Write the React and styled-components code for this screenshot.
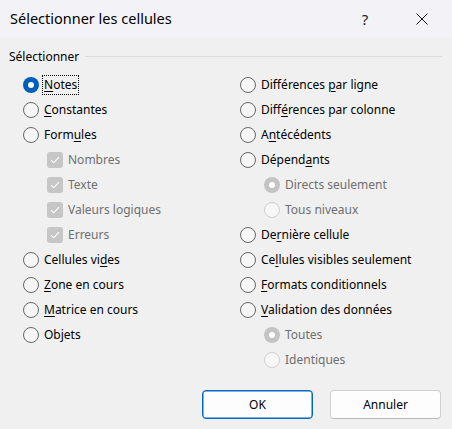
import React from "react";
import styled, { createGlobalStyle } from "styled-components";

const Global = createGlobalStyle`
  html, body { margin: 0; padding: 0; background: #f0f0f0; }
  body { font-family: "Noto Sans", "Open Sans", sans-serif; }
`;

const Window = styled.div`
  width: 452px;
  height: 429px;
  background: #f0f0f0;
  display: flex;
  flex-direction: column;
  overflow: hidden;
  color: #000;
`;

const TitleBar = styled.div`
  height: 37px;
  flex: none;
  background: #f3f3f7;
  display: flex;
  align-items: center;
  padding-left: 10px;
  padding-right: 7px;
`;

const Title = styled.div`
  flex: 1;
  font-size: 14.5px;
  line-height: 20px;
  margin-top: -1px;
`;

const Controls = styled.div`
  display: flex;
  gap: 11px;
`;

const TitleButton = styled.div`
  width: 46px;
  height: 37px;
  display: flex;
  align-items: center;
  justify-content: center;
  font-size: 15px;
  color: #1a1a1a;
`;

const Body = styled.div`
  padding: 10px 10px 0 9px;
  display: flex;
  flex-direction: column;
`;

const GroupHeader = styled.div`
  height: 18px;
  display: flex;
  align-items: center;
  gap: 6px;
  font-size: 12px;
`;

const GroupLine = styled.div`
  flex: 1;
  height: 1px;
  background: #dcdcdc;
  margin-top: 1px;
`;

const Columns = styled.div`
  margin-top: 7px;
  padding-left: 14px;
  display: grid;
  grid-template-columns: 217px 1fr;
  height: 300px;
`;

const Column = styled.div`
  display: flex;
  flex-direction: column;
`;

const Row = styled.div`
  height: 25px;
  display: flex;
  align-items: center;
  gap: 5px;
  padding-left: ${(p) => (p.$indent ? 24 : 0)}px;
  font-size: 12px;
  color: ${(p) => (p.$disabled ? "#6f6f6f" : "#000")};
  white-space: nowrap;
`;

const RadioCircle = styled.span`
  box-sizing: border-box;
  width: 16px;
  height: 16px;
  border-radius: 50%;
  flex: none;
  display: flex;
  align-items: center;
  justify-content: center;
  border: ${(p) =>
    p.$checked ? "none" : p.$disabled ? "1px solid #cfcfcf" : "1px solid #676767"};
  background: ${(p) =>
    p.$checked ? (p.$disabled ? "#c4c4c4" : "#005fb8") : p.$disabled ? "#f7f7f7" : "#f6f6f6"};
  &::after {
    content: "";
    display: ${(p) => (p.$checked ? "block" : "none")};
    width: 6px;
    height: 6px;
    border-radius: 50%;
    background: #fff;
  }
`;

const CheckBox = styled.span`
  width: 16px;
  height: 16px;
  border-radius: 3px;
  background: #c6c6c6;
  flex: none;
  display: flex;
  align-items: center;
  justify-content: center;
`;

const Label = styled.span`
  line-height: 16px;
  padding: 1px 1px;
  margin-left: -1px;
  outline: ${(p) => (p.$focus ? "1px dotted #000" : "none")};
  outline-offset: 0;
`;

const Key = styled.span`
  text-decoration: underline;
  text-underline-offset: 2px;
`;

const Footer = styled.div`
  display: flex;
  justify-content: flex-end;
  gap: 17px;
  margin-top: 18px;
  padding-right: 1px;
`;

const Button = styled.button`
  box-sizing: border-box;
  width: 111px;
  height: 29px;
  border-radius: 4px;
  background: #fdfdfd;
  font-family: inherit;
  font-size: 12px;
  color: #000;
  padding: 0;
  border: 1px solid ${(p) => (p.$primary ? "#0067c0" : "#d0d0d0")};
  border-bottom-color: ${(p) => (p.$primary ? "#0067c0" : "#b8b8b8")};
  box-shadow: ${(p) => (p.$primary ? "inset 0 0 0 0.5px #0067c0" : "none")};
`;

const Radio = ({ checked, disabled, indent, focus, children }) => (
  <Row $disabled={disabled} $indent={indent}>
    <RadioCircle $checked={checked} $disabled={disabled} />
    <Label $focus={focus}>{children}</Label>
  </Row>
);

const Check = ({ children }) => (
  <Row $disabled $indent>
    <CheckBox>
      <svg width="10" height="8" viewBox="0 0 10 8">
        <path d="M1 4.2 L3.7 6.8 L9 1.2" fill="none" stroke="#fff" strokeWidth="1.1" />
      </svg>
    </CheckBox>
    <Label>{children}</Label>
  </Row>
);

export default function App() {
  return (
    <Window>
      <Global />
      <TitleBar>
        <Title>Sélectionner les cellules</Title>
        <Controls>
          <TitleButton>?</TitleButton>
          <TitleButton>
            <svg width="12" height="12" viewBox="0 0 12 12">
              <path d="M0.5 0.5 L11.5 11.5 M11.5 0.5 L0.5 11.5" stroke="#1a1a1a" strokeWidth="1" />
            </svg>
          </TitleButton>
        </Controls>
      </TitleBar>
      <Body>
        <GroupHeader>
          <span>Sélectionner</span>
          <GroupLine />
        </GroupHeader>
        <Columns>
          <Column>
            <Radio checked focus><Key>N</Key>otes</Radio>
            <Radio><Key>C</Key>onstantes</Radio>
            <Radio>Form<Key>u</Key>les</Radio>
            <Check>Nombres</Check>
            <Check>Texte</Check>
            <Check>Valeurs logiques</Check>
            <Check>Erreurs</Check>
            <Radio>Cellules vi<Key>d</Key>es</Radio>
            <Radio><Key>Z</Key>one en cours</Radio>
            <Radio><Key>M</Key>atrice en cours</Radio>
            <Radio>Objets</Radio>
          </Column>
          <Column>
            <Radio>Différences <Key>p</Key>ar ligne</Radio>
            <Radio>Diff<Key>é</Key>rences par colonne</Radio>
            <Radio>A<Key>n</Key>técédents</Radio>
            <Radio>Dépend<Key>a</Key>nts</Radio>
            <Radio checked disabled indent>Directs seulement</Radio>
            <Radio disabled indent>Tous niveaux</Radio>
            <Radio>De<Key>r</Key>nière cellule</Radio>
            <Radio>Ce<Key>l</Key>lules visibles seulement</Radio>
            <Radio><Key>F</Key>ormats conditionnels</Radio>
            <Radio><Key>V</Key>alidation des données</Radio>
            <Radio checked disabled indent>Toutes</Radio>
            <Radio disabled indent>Identiques</Radio>
          </Column>
        </Columns>
        <Footer>
          <Button $primary>OK</Button>
          <Button>Annuler</Button>
        </Footer>
      </Body>
    </Window>
  );
}
